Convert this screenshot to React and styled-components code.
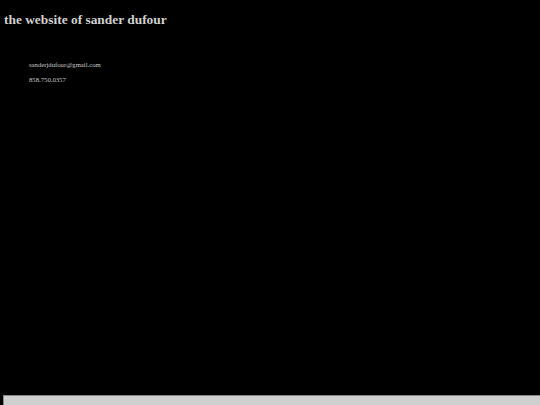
import React from 'react'
import styled, { createGlobalStyle } from 'styled-components'

const GlobalStyle = createGlobalStyle`
  html, body {
    margin: 0;
    background: #000;
  }
  body {
    padding: 0 0 0 3px;
    font-family: "Liberation Serif", "Times New Roman", serif;
    color: #ccc;
  }
`

const Page = styled.div`
  display: flex;
  flex-direction: column;
  min-height: 405px;
`

const Title = styled.h1`
  margin: 12px 0 0 1px;
  font-size: 13.4px;
  line-height: 15px;
  font-weight: bold;
  color: #d0d0d0;
`

const Contact = styled.div`
  display: flex;
  flex-direction: column;
  padding: 30px 0 0 26px;
  font-size: 6.7px;
  line-height: 15px;
  color: #c8c8c8;
`

const Frame = styled.div`
  margin-top: auto;
  height: 9px;
  background: #cfcfcf;
  border-top: 1px solid #888;
  border-left: 1px solid #888;
`

function App() {
  return (
    <Page>
      <GlobalStyle />
      <Title>the website of sander dufour</Title>
      <Contact>
        <span>sanderjdufour@gmail.com</span>
        <span>858.750.0357</span>
      </Contact>
      <Frame />
    </Page>
  )
}

export default App
